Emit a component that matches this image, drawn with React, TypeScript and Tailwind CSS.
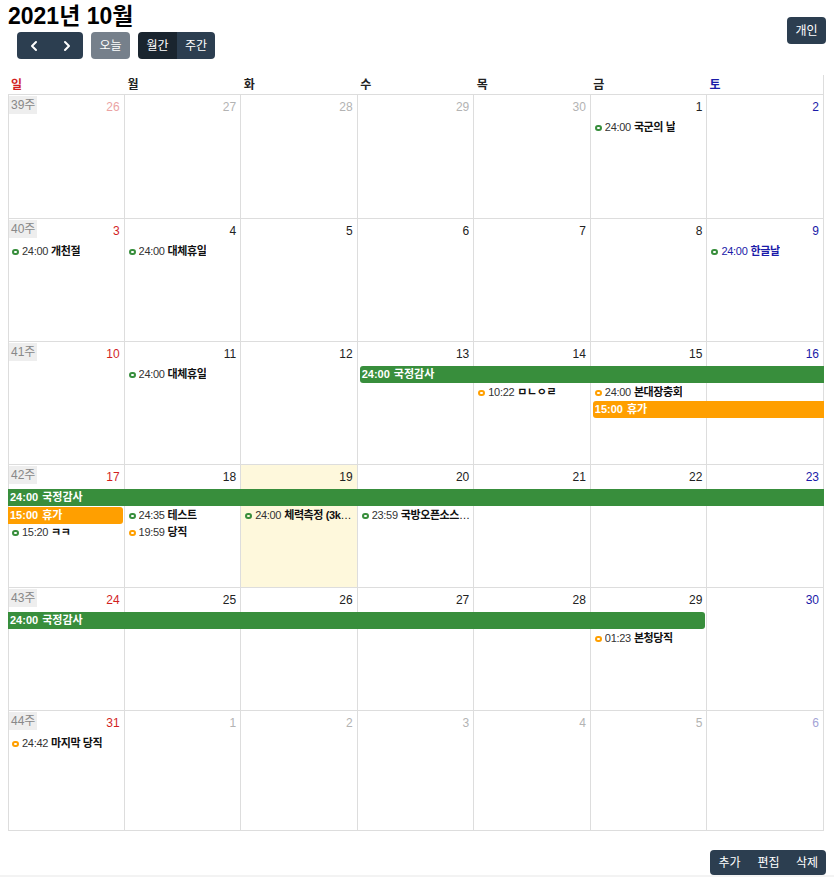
import React from 'react';
import { ChevronLeft, ChevronRight } from 'lucide-react';

type Ev = {
  col: number;
  span?: number;
  row: number;
  kind: 'bar' | 'dot';
  color: 'green' | 'orange';
  time: string;
  title: string;
  start?: boolean;
  end?: boolean;
  blue?: boolean;
};

type Day = { d: number; other?: boolean; today?: boolean };

type Week = { no: number; days: Day[]; events: Ev[]; h: string };

const colStart = ['', 'col-start-1', 'col-start-2', 'col-start-3', 'col-start-4', 'col-start-5', 'col-start-6', 'col-start-7'];
const colSpan = ['', 'col-span-1', 'col-span-2', 'col-span-3', 'col-span-4', 'col-span-5', 'col-span-6', 'col-span-7'];
const rowStart = ['', 'row-start-1', 'row-start-2', 'row-start-3', 'row-start-4'];

const mk = (nums: number[], otherIdx: number[] = [], todayIdx = -1): Day[] =>
  nums.map((d, i) => ({ d, other: otherIdx.includes(i), today: i === todayIdx }));

const weeks: Week[] = [
  {
    no: 39,
    h: 'h-[124px]',
    days: mk([26, 27, 28, 29, 30, 1, 2], [0, 1, 2, 3, 4]),
    events: [{ col: 6, row: 2, kind: 'dot', color: 'green', time: '24:00', title: '국군의 날' }],
  },
  {
    no: 40,
    h: 'h-[123px]',
    days: mk([3, 4, 5, 6, 7, 8, 9]),
    events: [
      { col: 1, row: 2, kind: 'dot', color: 'green', time: '24:00', title: '개천절' },
      { col: 2, row: 2, kind: 'dot', color: 'green', time: '24:00', title: '대체휴일' },
      { col: 7, row: 2, kind: 'dot', color: 'green', time: '24:00', title: '한글날', blue: true },
    ],
  },
  {
    no: 41,
    h: 'h-[123px]',
    days: mk([10, 11, 12, 13, 14, 15, 16]),
    events: [
      { col: 2, row: 2, kind: 'dot', color: 'green', time: '24:00', title: '대체휴일' },
      { col: 4, span: 4, row: 2, kind: 'bar', color: 'green', time: '24:00', title: '국정감사', start: true },
      { col: 5, row: 3, kind: 'dot', color: 'orange', time: '10:22', title: 'ㅁㄴㅇㄹ' },
      { col: 6, row: 3, kind: 'dot', color: 'orange', time: '24:00', title: '본대장충회' },
      { col: 6, span: 2, row: 4, kind: 'bar', color: 'orange', time: '15:00', title: '휴가', start: true },
    ],
  },
  {
    no: 42,
    h: 'h-[123px]',
    days: mk([17, 18, 19, 20, 21, 22, 23], [], 2),
    events: [
      { col: 1, span: 7, row: 2, kind: 'bar', color: 'green', time: '24:00', title: '국정감사' },
      { col: 1, row: 3, kind: 'bar', color: 'orange', time: '15:00', title: '휴가', end: true },
      { col: 1, row: 4, kind: 'dot', color: 'green', time: '15:20', title: 'ㅋㅋ' },
      { col: 2, row: 3, kind: 'dot', color: 'green', time: '24:35', title: '테스트' },
      { col: 2, row: 4, kind: 'dot', color: 'orange', time: '19:59', title: '당직' },
      { col: 3, row: 3, kind: 'dot', color: 'green', time: '24:00', title: '체력측정 (3km 달리기)' },
      { col: 4, row: 3, kind: 'dot', color: 'green', time: '23:59', title: '국방오픈소스아카데미' },
    ],
  },
  {
    no: 43,
    h: 'h-[123px]',
    days: mk([24, 25, 26, 27, 28, 29, 30]),
    events: [
      { col: 1, span: 6, row: 2, kind: 'bar', color: 'green', time: '24:00', title: '국정감사', end: true },
      { col: 6, row: 3, kind: 'dot', color: 'orange', time: '01:23', title: '본청당직' },
    ],
  },
  {
    no: 44,
    h: 'h-[120px]',
    days: mk([31, 1, 2, 3, 4, 5, 6], [1, 2, 3, 4, 5, 6]),
    events: [{ col: 1, row: 2, kind: 'dot', color: 'orange', time: '24:42', title: '마지막 당직' }],
  },
];

const dayNames = ['일', '월', '화', '수', '목', '금', '토'];

function dayColor(i: number, other?: boolean) {
  if (i === 0) return other ? 'text-[#eba3a3]' : 'text-[#d21f1f]';
  if (i === 6) return other ? 'text-[#a3a3d6]' : 'text-[#1a1aa8]';
  return other ? 'text-[#b3b3b3]' : 'text-[#222]';
}

const EventItem: React.FC<{ ev: Ev }> = ({ ev }) => {
  const place = `${colStart[ev.col]} ${colSpan[ev.span ?? 1]} ${rowStart[ev.row]}`;
  if (ev.kind === 'bar') {
    const bg = ev.color === 'green' ? 'bg-[#388e3c]' : 'bg-[#ff9f00]';
    return (
      <div
        className={`${place} ${bg} h-[17px] flex items-center px-[2px] text-white text-[11px] whitespace-nowrap overflow-hidden ${
          ev.start ? 'ml-[2px] rounded-l-[3px]' : ''
        } ${ev.end ? 'mr-[2px] rounded-r-[3px]' : ''}`}
      >
        <span className="mr-[4px] font-bold">{ev.time}</span>
        <span className="font-semibold">{ev.title}</span>
      </div>
    );
  }
  const ring = ev.color === 'green' ? 'border-[#388e3c]' : 'border-[#ff9f00]';
  return (
    <div className={`${place} h-[17px] flex items-center pl-[4px] pr-[2px] min-w-0 overflow-hidden`}>
      <span className={`w-[7px] h-[6px] shrink-0 rounded-[3px] border-2 ${ring} mr-[3px]`} />
      <span className={`truncate text-[11px] ${ev.blue ? 'text-[#1a1aa8]' : 'text-[#111]'}`}>
        <span className={`mr-[3px] tracking-[-0.3px] ${ev.blue ? '' : 'text-[#333]'}`}>{ev.time}</span>
        <span className="font-semibold tracking-[-0.4px]">{ev.title}</span>
      </span>
    </div>
  );
};

const WeekRow: React.FC<{ week: Week }> = ({ week }) => (
  <div className={`grid grid-cols-7 grid-rows-[24px_18px_17px_17px_1fr] ${week.h}`}>
    {week.days.map((day, i) => (
      <div
        key={i}
        className={`${colStart[i + 1]} row-span-full border-r border-b border-[#dddddd] ${
          day.today ? 'bg-[#fef8dc]' : ''
        } ${i === 0 ? 'border-l' : ''}`}
      >
        <div className="flex justify-between items-start">
          {i === 0 ? (
            <span className="bg-[#eeeeee] text-[#888] text-[12px] leading-[18px] px-[2px] mt-[1px]">{week.no}주</span>
          ) : (
            <span />
          )}
          <span className={`text-[12px] leading-[14px] pt-[5px] pr-[4px] ${dayColor(i, day.other)}`}>{day.d}</span>
        </div>
      </div>
    ))}
    {week.events.map((ev, k) => (
      <EventItem key={k} ev={ev} />
    ))}
  </div>
);

export default function App() {
  return (
    <div
      className="w-[834px] h-[877px] bg-white flex flex-col overflow-hidden"
      style={{ fontFamily: '"Liberation Sans", "Noto Sans CJK KR", sans-serif' }}
    >
      <div className="flex justify-between items-start px-[8px] pt-[2px]">
        <div>
          <h1 className="text-[23px] font-bold leading-[28px] text-black">2021년 10월</h1>
          <div className="flex items-center gap-[8px] ml-[9px] mt-[2px]">
            <div className="flex rounded-[4px] overflow-hidden bg-[#2c3e50] text-white">
              <button className="w-[33px] h-[27px] flex items-center justify-center">
                <ChevronLeft size={16} strokeWidth={3} />
              </button>
              <button className="w-[33px] h-[27px] flex items-center justify-center">
                <ChevronRight size={16} strokeWidth={3} />
              </button>
            </div>
            <button className="h-[27px] w-[39px] rounded-[4px] bg-[#76808b] text-white text-[12px]">오늘</button>
            <div className="flex rounded-[4px] overflow-hidden text-white text-[12px]">
              <button className="h-[27px] w-[39px] bg-[#1a252f]">월간</button>
              <button className="h-[27px] w-[38px] bg-[#2c3e50]">주간</button>
            </div>
          </div>
        </div>
        <button className="mt-[15px] h-[27px] w-[39px] rounded-[4px] bg-[#2c3e50] text-white text-[12px]">
          개인
        </button>
      </div>

      <div className="ml-[8px] mr-[10px] mt-[16px]">
        <div className="grid grid-cols-7 h-[20px] border-r border-[#dddddd] border-b">
          {dayNames.map((n, i) => (
            <div
              key={n}
              className={`text-[12px] font-semibold pl-[3px] leading-[20px] ${
                i === 0 ? 'text-[#d21f1f]' : i === 6 ? 'text-[#1a1aa8]' : 'text-[#222]'
              }`}
            >
              {n}
            </div>
          ))}
        </div>
        {weeks.map((w) => (
          <WeekRow key={w.no} week={w} />
        ))}
      </div>

      <div className="flex justify-end px-[8px] mt-[19px]">
        <div className="flex rounded-[4px] overflow-hidden bg-[#2c3e50] text-white text-[12px]">
          <button className="h-[25px] w-[39px]">추가</button>
          <button className="h-[25px] w-[39px]">편집</button>
          <button className="h-[25px] w-[38px]">삭제</button>
        </div>
      </div>
      <div className="flex-1" />
      <div className="h-[4px] bg-[#f3f3f3]" />
    </div>
  );
}
